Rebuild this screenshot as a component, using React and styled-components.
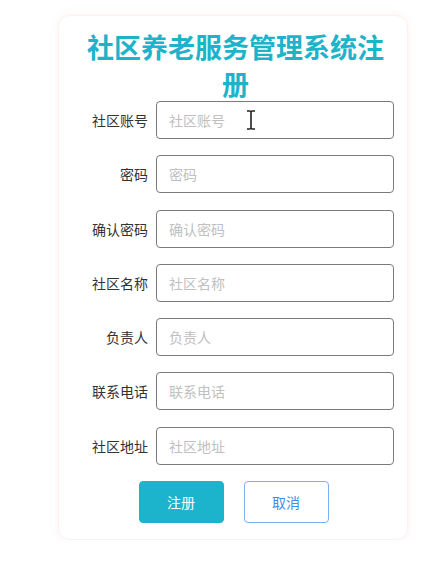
import React from "react";
import styled, { createGlobalStyle } from "styled-components";

const Global = createGlobalStyle`
  html, body { margin: 0; padding: 0; background: #fff; }
  body { font-family: "Noto Sans CJK SC", "Liberation Sans", sans-serif; }
`;

const Card = styled.div`
  position: relative;
  box-sizing: border-box;
  margin: 15px 0 0 58px;
  width: 350px;
  height: 525px;
  border: 1px solid #fdf0f0;
  border-radius: 12px;
  box-shadow: 0 0 8px rgba(250, 200, 200, 0.25);
  padding: 12px 15px 0 20px;
`;

const Title = styled.h1`
  margin: 0 0 -1px 0;
  padding: 0 4px;
  text-align: center;
  color: #1fb3c9;
  font-size: 27px;
  line-height: 37px;
  font-weight: 700;
`;

const Form = styled.div`
  display: grid;
  grid-template-columns: 69px 238px;
  column-gap: 8px;
  row-gap: 16.3px;
  align-items: center;
`;

const Label = styled.label`
  text-align: right;
  font-size: 14px;
  color: #333;
`;

const Field = styled.div`
  position: relative;
`;

const Input = styled.input`
  box-sizing: border-box;
  width: 238px;
  height: 38px;
  border: 1.5px solid #7a7a7a;
  border-radius: 4px;
  padding: 0 12px;
  font-family: inherit;
  font-size: 14px;
  color: #333;
  outline: none;
  &::placeholder { color: #c0c0c0; }
`;

const Cursor = styled.svg`
  position: absolute;
  left: 90px;
  top: 9px;
  pointer-events: none;
`;

const Buttons = styled.div`
  display: flex;
  justify-content: center;
  gap: 20px;
  margin-top: 16px;
  padding-right: 4px;
`;

const Button = styled.button`
  box-sizing: border-box;
  width: 85px;
  height: 42px;
  border-radius: 4px;
  font-family: inherit;
  font-size: 14px;
  cursor: pointer;
  background: ${(p) => (p.$primary ? "#1bb4cc" : "#fff")};
  color: ${(p) => (p.$primary ? "#fff" : "#3d8fe8")};
  border: 1.5px solid ${(p) => (p.$primary ? "#1bb4cc" : "#79b0f0")};
`;

const fields = ["社区账号", "密码", "确认密码", "社区名称", "负责人", "联系电话", "社区地址"];

export default function App() {
  return (
    <>
      <Global />
      <Card>
        <Title>社区养老服务管理系统注册</Title>
        <Form>
          {fields.map((f, i) => (
            <React.Fragment key={f}>
              <Label>{f}</Label>
              <Field>
                <Input placeholder={f} />
                {i === 0 && (
                  <Cursor width="10" height="20" viewBox="0 0 10 20">
                    <path d="M1 1 H4 Q5 1 5 3 V17 Q5 19 4 19 H1 M9 1 H6 Q5 1 5 3 M5 17 Q5 19 6 19 H9" fill="none" stroke="#222" strokeWidth="1.6" />
                  </Cursor>
                )}
              </Field>
            </React.Fragment>
          ))}
        </Form>
        <Buttons>
          <Button $primary>注册</Button>
          <Button>取消</Button>
        </Buttons>
      </Card>
    </>
  );
}
